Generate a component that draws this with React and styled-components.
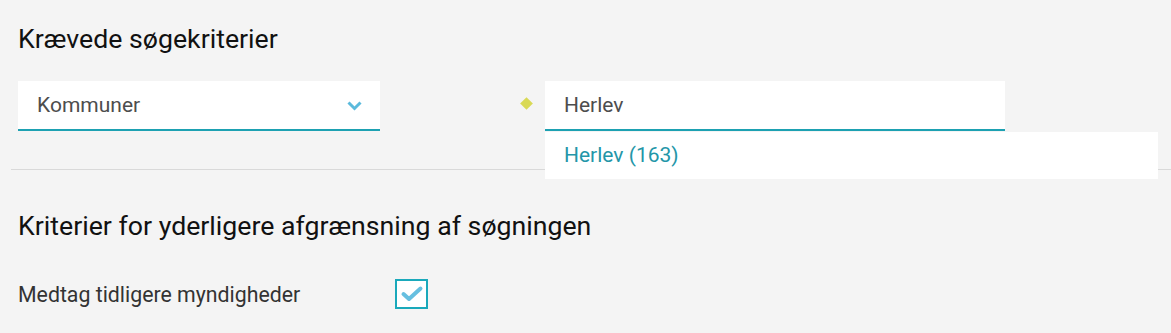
import React from 'react';
import styled, { createGlobalStyle } from 'styled-components';

const GlobalStyle = createGlobalStyle`
  html, body {
    margin: 0;
    padding: 0;
    background: #f4f4f4;
    font-family: Roboto, 'Liberation Sans', sans-serif;
  }
`;

const Page = styled.div`
  width: 1171px;
  height: 333px;
  overflow: hidden;
  background: #f4f4f4;
`;

const Section = styled.section`
  padding: ${(p) => p.$top}px 0 0 18px;
`;

const Title = styled.h2`
  margin: 0;
  font-size: 26.7px;
  font-weight: 400;
  line-height: 30px;
  color: #111;
`;

const FieldRow = styled.div`
  display: flex;
  align-items: flex-start;
  margin-top: 27px;
  height: 50px;
`;

const Select = styled.div`
  width: 362px;
  height: 48px;
  box-sizing: content-box;
  background: #fff;
  border-bottom: 2px solid #1da1b2;
  display: flex;
  align-items: center;
  justify-content: space-between;
`;

const SelectText = styled.span`
  padding-left: 19px;
  font-size: 21px;
  color: #4d4d4d;
`;

const Chevron = styled.svg`
  margin-right: 18px;
  margin-top: 2px;
`;

const Required = styled.span`
  width: 9px;
  height: 9px;
  background: #d9d955;
  transform: rotate(45deg);
  margin: 17.5px 14.5px 0 141.5px;
  flex: none;
`;

const SearchBox = styled.div`
  position: relative;
  width: 460px;
`;

const Input = styled.input`
  display: block;
  width: 441px;
  height: 48px;
  box-sizing: content-box;
  border: none;
  border-bottom: 2px solid #1da1b2;
  background: #fff;
  padding: 0 0 0 19px;
  margin: 0;
  font-family: inherit;
  font-size: 21px;
  color: #4d4d4d;
  outline: none;
`;

const Suggestions = styled.ul`
  position: absolute;
  top: 51px;
  left: 0;
  width: 613px;
  margin: 0;
  padding: 0;
  list-style: none;
  background: #fff;
  z-index: 2;
`;

const Suggestion = styled.li`
  height: 47px;
  line-height: 47px;
  padding-left: 19px;
  font-size: 21px;
  color: #2496a8;
`;

const Divider = styled.hr`
  margin: 38px 0 0 11px;
  border: none;
  border-top: 1px solid #d9d9d9;
  height: 0;
`;

const OptionRow = styled.label`
  display: flex;
  align-items: center;
  margin-top: 38px;
`;

const OptionLabel = styled.span`
  width: 377px;
  font-size: 21.3px;
  color: #333;
`;

const CheckBox = styled.span`
  width: 29px;
  height: 26px;
  border: 2px solid #1aa9bb;
  background: #fff;
  display: flex;
  align-items: center;
  justify-content: center;
`;

export default function App() {
  return (
    <Page>
      <GlobalStyle />
      <Section $top={24}>
        <Title>Krævede søgekriterier</Title>
        <FieldRow>
          <Select>
            <SelectText>Kommuner</SelectText>
            <Chevron width="15" height="10" viewBox="0 0 15 10">
              <path d="M1.5 1.5 L7.5 7.5 L13.5 1.5" fill="none" stroke="#5bbadc" strokeWidth="3" />
            </Chevron>
          </Select>
          <Required />
          <SearchBox>
            <Input defaultValue="Herlev" />
            <Suggestions>
              <Suggestion>Herlev (163)</Suggestion>
            </Suggestions>
          </SearchBox>
        </FieldRow>
      </Section>
      <Divider />
      <Section $top={41}>
        <Title>Kriterier for yderligere afgrænsning af søgningen</Title>
        <OptionRow>
          <OptionLabel>Medtag tidligere myndigheder</OptionLabel>
          <CheckBox>
            <svg width="24" height="18" viewBox="0 0 24 18">
              <path d="M3.5 9 L9 14 L20.5 3.5" fill="none" stroke="#66bfe0" strokeWidth="4" strokeLinecap="round" strokeLinejoin="round" />
            </svg>
          </CheckBox>
        </OptionRow>
      </Section>
    </Page>
  );
}
